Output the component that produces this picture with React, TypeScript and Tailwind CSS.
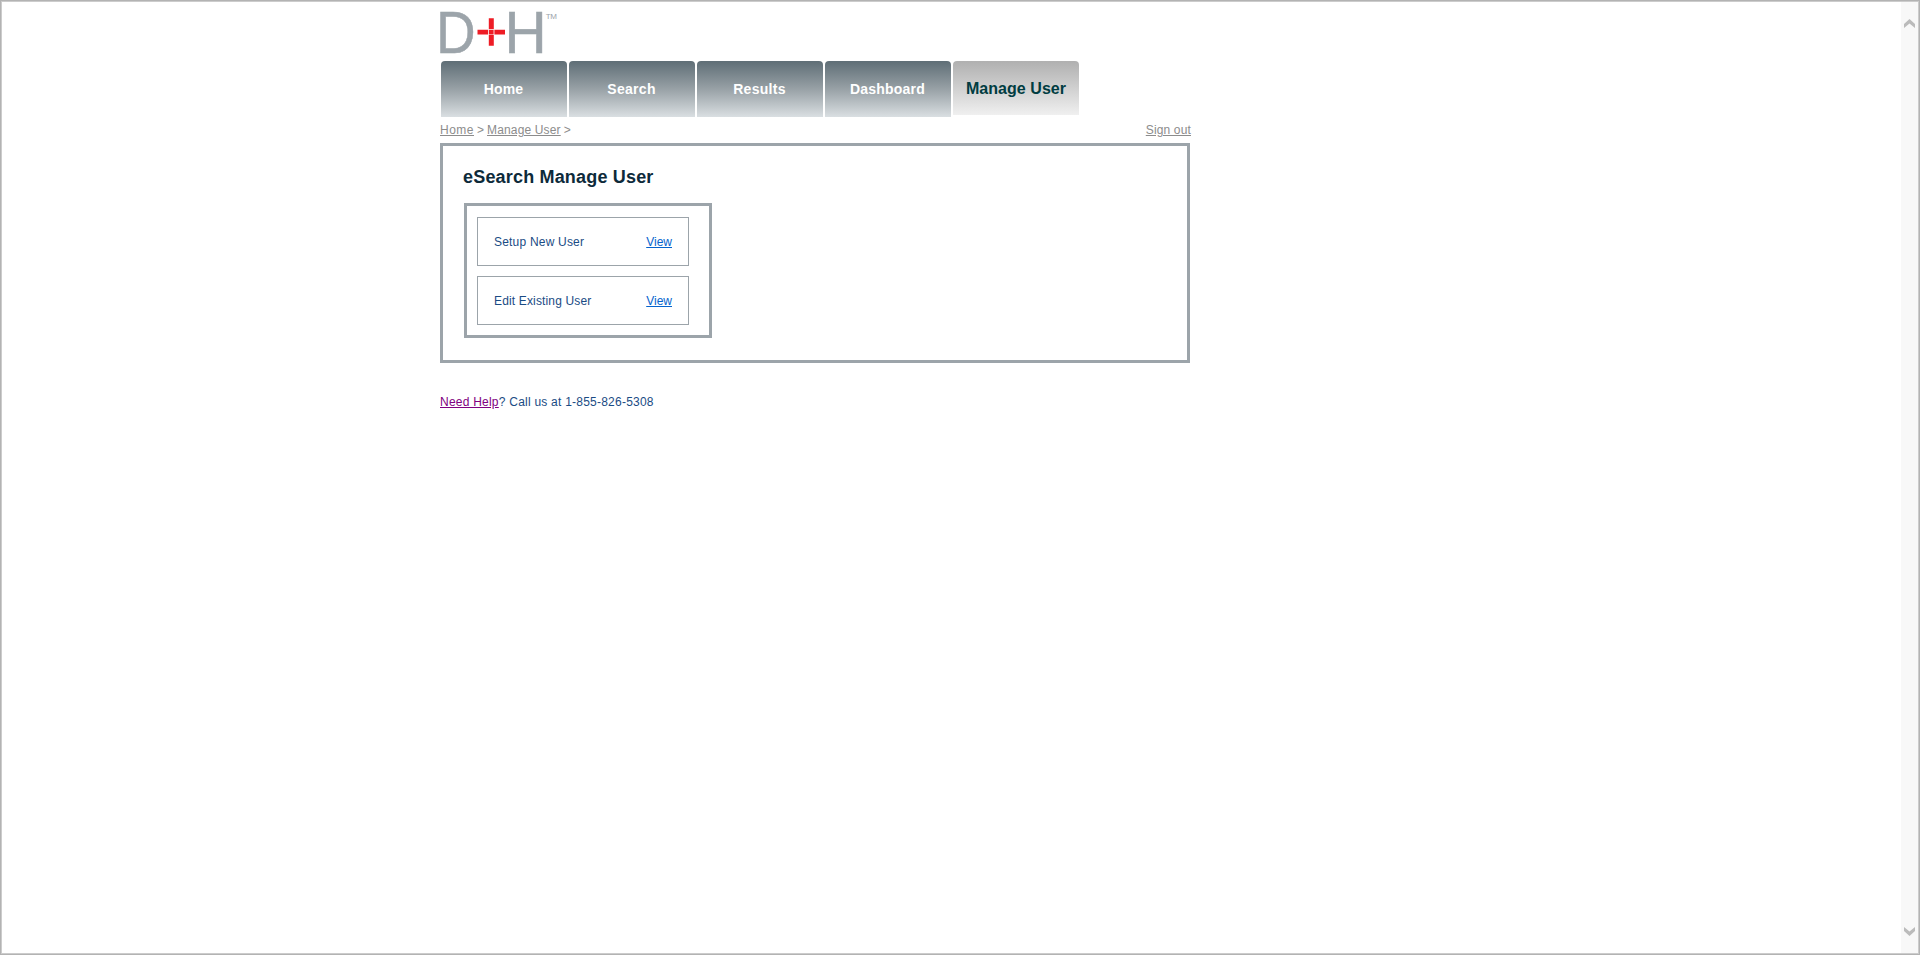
import React from 'react';

const tabs = [
  { label: 'Home', spacing: 'tracking-[0.1px]' },
  { label: 'Search', spacing: 'tracking-[0.3px]' },
  { label: 'Results', spacing: 'tracking-[0.3px]' },
  { label: 'Dashboard', spacing: 'tracking-[0.2px]' },
];
const actions = [
  { label: 'Setup New User', spacing: 'tracking-[0.2px]' },
  { label: 'Edit Existing User', spacing: 'tracking-[0.15px]' },
];

function Logo() {
  return (
    <svg width="122" height="44" viewBox="0 0 122 44" className="block overflow-visible" fontFamily="Liberation Sans, Arial, sans-serif">
      <g fill="#9ca4aa">
        <g stroke="#9ca4aa" strokeWidth="0.5">
          <text transform="translate(-4 41.8) scale(0.93 1)" fontSize="59">D</text>
          <text transform="translate(64.5 41.8) scale(0.99 1)" fontSize="59">H</text>
        </g>
        <text x="105.8" y="7.8" fontSize="8" textLength="11">TM</text>
      </g>
      <path fill="#ee1c25" d="M48.8 7.3h5v10.9h-5zM48.8 24h5v10.8h-5zM37.5 18.8h10.7v4.8h-10.7zM54.4 18.8h10.6v4.8h-10.6zM49 19h4.6v4.4h-4.6z" />
    </svg>
  );
}

function Chevron({ down = false }: { down?: boolean }) {
  return (
    <svg width="11" height="9" viewBox="0 0 11 9" className="block">
      <path d={down ? 'M0 0L5.5 4.5L11 0V4L5.5 9L0 4Z' : 'M0 9L5.5 4.5L11 9V5L5.5 0L0 5Z'} fill="#bbbbbb" />
    </svg>
  );
}

export default function App() {
  return (
    <div className="flex h-[955px] w-full bg-[#b3b3b3] p-px font-['Liberation_Sans',Arial,sans-serif] text-xs text-[#1a4b84]">
      <div className="flex flex-1 border border-[#cccccc] bg-white">
        <main className="flex-1 pl-[438px] pt-[9px]">
          <Logo />
          <nav className="ml-px mt-[6px] flex gap-[2px]">
            {tabs.map(({ label, spacing }) => (
              <a key={label} className="flex h-14 w-[126px] items-center justify-center rounded-t-[4px] bg-linear-to-b from-[#5f6e76] via-[#98a1a6] to-[#dadfe2] pr-px text-sm font-bold text-white">
                <span className={spacing}>{label}</span>
              </a>
            ))}
            <a className="flex h-[54px] w-[126px] items-center justify-center rounded-t-[4px] bg-linear-to-b from-[#b0b0b0] to-[#f0f0f0] pt-[2px] text-base font-bold tracking-[0.05px] text-[#003c41]">
              Manage User
            </a>
          </nav>
          <div className="mt-[6px] flex h-[15px] w-[751px] justify-between leading-[15px] text-[#8c8c8c]">
            <div className="flex gap-[3px]">
              <a className="tracking-[0.5px] underline">Home</a>
              <span>&gt;</span>
              <a className="tracking-[0.15px] underline">Manage User</a>
              <span>&gt;</span>
            </div>
            <a className="tracking-[0.15px] underline">Sign out</a>
          </div>
          <section className="mt-[5px] h-[220px] w-[750px] border-[3px] border-[#9ca4aa] pl-[20px] pt-[20px]">
            <h1 className="text-lg font-bold leading-[22px] tracking-[0.18px] text-[#0d2a3a]">eSearch Manage User</h1>
            <div className="ml-px mt-[15px] flex h-[135px] w-[248px] flex-col gap-[10px] border-[3px] border-[#9ca4aa] pl-[10px] pt-[11px]">
              {actions.map(({ label, spacing }) => (
                <div key={label} className="flex h-[49px] w-[212px] items-center justify-between border border-[#9ca4aa] px-4">
                  <span className={spacing}>{label}</span>
                  <a className="text-[#0563cd] underline">View</a>
                </div>
              ))}
            </div>
          </section>
          <p className="mt-[31px] leading-4 tracking-[0.23px]">
            <a className="text-[#800080] underline">Need Help</a>? Call us at 1-855-826-5308
          </p>
        </main>
        <aside className="flex w-[17px] flex-col items-center justify-between bg-[#f8f8f8] pb-[17px] pt-[17px]">
          <Chevron />
          <Chevron down />
        </aside>
      </div>
    </div>
  );
}
